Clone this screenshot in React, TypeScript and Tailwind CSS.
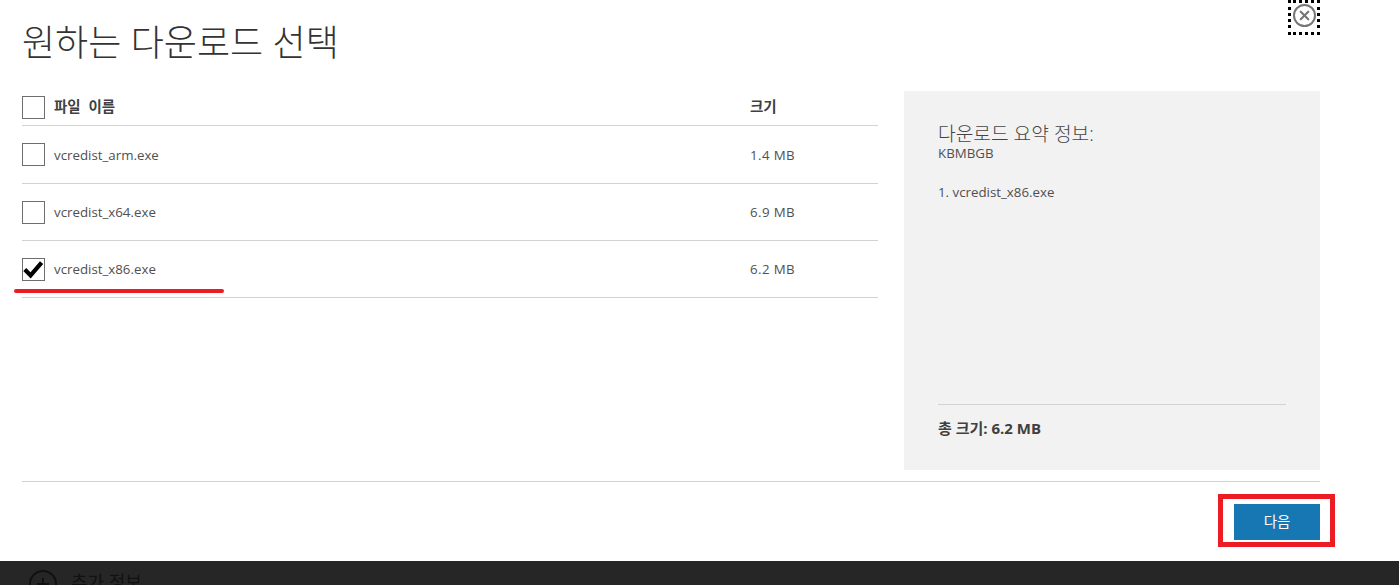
import { Plus, X } from 'lucide-react'

const font = '[font-family:"Open_Sans","Noto_Sans_CJK_KR",sans-serif]'

const files = [
  { name: 'vcredist_arm.exe', size: '1.4 MB', h: 'h-[58px]', checked: false },
  { name: 'vcredist_x64.exe', size: '6.9 MB', h: 'h-[57px]', checked: false },
  { name: 'vcredist_x86.exe', size: '6.2 MB', h: 'h-[57px]', checked: true },
]

function Box({ checked }: { checked?: boolean }) {
  return (
    <span className="relative block h-[23px] w-[23px] shrink-0 border border-[#6e6e6e] bg-white">
      {checked && (
        <svg viewBox="0 0 23 23" className="absolute -left-[1px] -top-[1px] h-[23px] w-[23px]">
          <path d="M2.8 11.5 L8.6 17.4 L19.6 4.6" fill="none" stroke="#000" strokeWidth="4.2" />
        </svg>
      )}
    </span>
  )
}

export default function App() {
  return (
    <main className={`${font} flex h-[585px] w-[1399px] flex-col overflow-hidden bg-white text-[#505050]`}>
      <div className="relative h-[561px] shrink-0 pl-[22px] pr-[79px]">
        <button className="absolute left-[1288px] top-0 flex h-[35px] w-[32px] items-start justify-center border-[3px] border-dotted border-black pt-[1px]">
          <span className="flex h-[23px] w-[23px] items-center justify-center rounded-full border-2 border-[#777]">
            <X size={15} strokeWidth={3.5} className="text-[#777]" />
          </span>
        </button>

        <h1 className="h-[91px] pt-[19px] text-[36px] font-light leading-[48px] text-[#333]">원하는 다운로드 선택</h1>

        <div className="flex h-[379px] justify-between">
          <section className="relative w-[856px]">
            <div className="flex h-[35px] items-start border-b border-[#d2d2d2] pt-[5px] text-[14.5px] font-bold leading-[21px] text-[#404040]">
              <Box />
              <span className="ml-[9px] w-[696px] [word-spacing:4px]">파일 이름</span>
              <span>크기</span>
            </div>
            {files.map((f) => (
              <div key={f.name} className={`flex ${f.h} items-center border-b border-[#d2d2d2] text-[13.3px]`}>
                <Box checked={f.checked} />
                <span className="ml-[9px] w-[696px] pt-[2px]">{f.name}</span>
                <span className="pt-[2px] tracking-[0.4px]">{f.size}</span>
              </div>
            ))}
            <div className="absolute left-[-8px] top-[198px] h-[4px] w-[210px] rounded-full bg-[#ed1c24]" />
          </section>

          <aside className="flex w-[416px] flex-col bg-[#f2f2f2] px-[34px] pb-[32px] pt-[33px]">
            <p className="text-[19.2px] font-light leading-[20px] text-[#444]">다운로드 요약 정보:</p>
            <p className="text-[13.3px] leading-[18px]">KBMBGB</p>
            <p className="mt-[21px] text-[13.3px] leading-[18px]">1. vcredist_x86.exe</p>
            <div className="mt-auto border-t border-[#d2d2d2] pt-[13px] text-[15px] font-bold leading-[20px] text-[#404040]">총 크기: 6.2 MB</div>
          </aside>
        </div>

        <div className="mt-[11px] flex justify-end border-t border-[#d2d2d2] pt-[22px]">
          <button className="h-[36px] w-[86px] bg-[#1777b2] text-[14.5px] text-white">다음</button>
        </div>
        <div className="absolute left-[1218px] top-[494px] h-[53px] w-[117px] border-[5px] border-[#ed1c24]" />
      </div>

      <footer className="flex h-[24px] items-start gap-[14px] overflow-hidden bg-[#262626] pl-[29px] pt-[9px] text-[#111]">
        <span className="flex h-[28px] w-[28px] shrink-0 items-center justify-center rounded-full border-2 border-[#111]">
          <Plus size={18} strokeWidth={2.5} />
        </span>
        <span className="text-[18px] leading-[24px]">추가 정보</span>
      </footer>
    </main>
  )
}
